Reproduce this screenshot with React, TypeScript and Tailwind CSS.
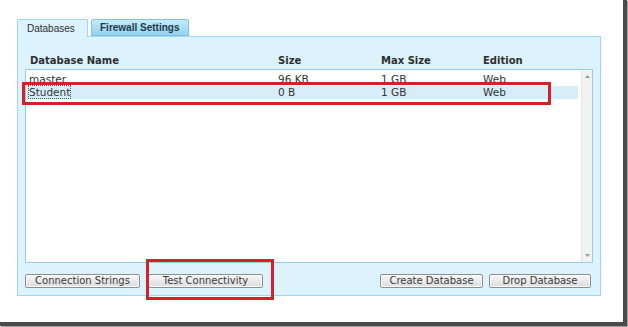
const rows = [
  { name: "master", size: "96 KB", max: "1 GB", edition: "Web", selected: false },
  { name: "Student", size: "0 B", max: "1 GB", edition: "Web", selected: true },
];

function Btn({ label, w }: { label: string; w: string }) {
  return (
    <button
      className={`${w} h-[14px] rounded-[2px] border border-[#8e8e8e] bg-gradient-to-b from-[#f7f7f7] to-[#dcdcdc] text-center text-[10px] leading-[12px] text-[#3a3a3a] shadow-[inset_0_0_0_1px_#ffffff]`}
    >
      {label}
    </button>
  );
}

export default function App() {
  return (
    <div className="relative h-[327px] w-[628px] overflow-hidden bg-white font-['DejaVu_Sans',sans-serif]">
      <div className="h-[326px] w-[627px] border-r-[4px] border-b-[4px] border-[#4a4a4a] bg-white shadow-[1px_1px_0_#a0a0a0]">
        <div className="pl-[17px] pt-[19px]">
          {/* tabs */}
          <div className="flex items-end gap-[3px] font-['Liberation_Sans',sans-serif] text-[10px]">
            <div className="relative z-10 -mb-px flex h-[18px] w-[71px] items-center rounded-t-[2px] border border-b-0 border-[#9fd6ea] bg-[#dcf2fc] pl-[9px] text-[#2e2e2e]">
              Databases
            </div>
            <div className="flex h-[17px] w-[98px] items-center rounded-t-[2px] border border-[#7fc3e0] bg-gradient-to-b from-[#c6eafa] to-[#92d2ee] pl-[8px] font-bold text-[#1e3a4a]">
              Firewall Settings
            </div>
          </div>

          {/* panel */}
          <div className="flex h-[260px] w-[584px] flex-col border border-[#9fd6ea] bg-[#dcf2fc] px-[7px] pb-[7px] pt-[18px]">
            <div className="grid grid-cols-[248px_103px_102px_1fr] pl-[5px] text-[10px] font-bold leading-[12px] text-[#2f2f2f]">
              <div>Database Name</div>
              <div>Size</div>
              <div>Max Size</div>
              <div>Edition</div>
            </div>

            <div className="mt-[2px] flex h-[194px] border border-[#95cfe6] bg-white">
              <div className="flex-1 pr-[3px] pt-[3px] text-[10.5px] leading-[13px] text-[#333]">
                {rows.map((r) => (
                  <div
                    key={r.name}
                    className={`grid h-[13px] grid-cols-[249px_103px_102px_1fr] pl-[3px] ${r.selected ? "bg-[#d7eefa]" : ""}`}
                  >
                    <div>
                      <span className={r.selected ? "outline outline-1 outline-dotted outline-[#555]" : ""}>
                        {r.name}
                      </span>
                    </div>
                    <div>{r.size}</div>
                    <div>{r.max}</div>
                    <div>{r.edition}</div>
                  </div>
                ))}
              </div>
              <div className="flex w-[11px] flex-col items-center justify-between border-l border-[#e4e4e4] bg-[#f2f2f2] py-[5px]">
                <svg width="5" height="3" viewBox="0 0 5 3">
                  <path d="M0 3 L2.5 0 L5 3 Z" fill="#9a9a9a" />
                </svg>
                <svg width="5" height="3" viewBox="0 0 5 3">
                  <path d="M0 0 L2.5 3 L5 0 Z" fill="#9a9a9a" />
                </svg>
              </div>
            </div>

            <div className="mt-[11px] flex">
              <div className="flex gap-[8px]">
                <Btn label="Connection Strings" w="w-[115px]" />
                <Btn label="Test Connectivity" w="w-[115px]" />
              </div>
              <div className="ml-auto mr-[2px] flex gap-[6px]">
                <Btn label="Create Database" w="w-[103px]" />
                <Btn label="Drop Database" w="w-[102px]" />
              </div>
            </div>
          </div>
        </div>
      </div>

      {/* red highlight boxes */}
      <div className="absolute left-[22px] top-[82px] h-[23px] w-[529px] border-[3px] border-[#d5202a]" />
      <div className="absolute left-[146px] top-[259px] h-[41px] w-[128px] border-[3px] border-[#d5202a]" />
    </div>
  );
}
